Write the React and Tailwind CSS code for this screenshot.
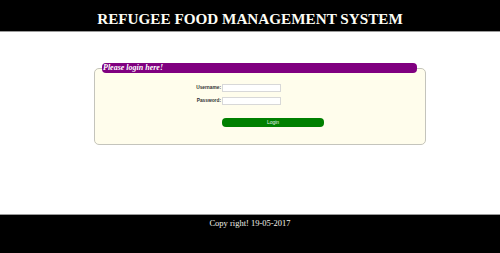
export default function App() {
  return (
    <div className="flex h-[253px] w-[500px] flex-col bg-white font-['Liberation_Serif',serif]">
      <header className="h-[32px] border-b border-[#9a9a9a] bg-black pt-[10px] text-center">
        <h1 className="text-[15.2px] font-bold leading-[17px] text-[#fdfdf5]">
          REFUGEE FOOD MANAGEMENT SYSTEM
        </h1>
      </header>

      <main className="flex-1">
        <fieldset className="ml-[94px] mt-[31px] w-[332px] rounded-[5px] border border-[#c4c4bc] bg-[#fffdec] pb-[17px] pl-[7px] pr-[8px]">
          <legend className="h-[10px] w-[315px] rounded-[4px] bg-[#800080] pl-[1px] text-[8px] font-bold italic leading-[10px] text-white">
            Please login here!
          </legend>

          <div className="ml-[94px] mt-[11px] grid w-fit grid-cols-[26px_102px] items-center gap-y-[5px] font-['Liberation_Sans',sans-serif]">
            <label className="whitespace-nowrap pr-[1px] text-right text-[4.8px] font-bold text-[#333]">Username:</label>
            <input className="h-[8px] w-[59px] border border-[#d8d8d8] bg-white" />
            <label className="whitespace-nowrap pr-[1px] text-right text-[4.8px] font-bold text-[#333]">Password:</label>
            <input type="password" className="h-[8px] w-[59px] border border-[#d8d8d8] bg-white" />
            <div />
            <button className="mt-[8px] h-[9px] w-[102px] rounded-[4px] bg-[#008000] text-[5px] leading-[9px] text-[#e8f0e8]">
              Login
            </button>
          </div>
        </fieldset>
      </main>

      <footer className="h-[39px] border-t border-[#9a9a9a] bg-black pt-[3px] text-center">
        <p className="text-[8.5px] leading-[11px] text-[#f2f2ea]">Copy right! 19-05-2017</p>
      </footer>
    </div>
  );
}
